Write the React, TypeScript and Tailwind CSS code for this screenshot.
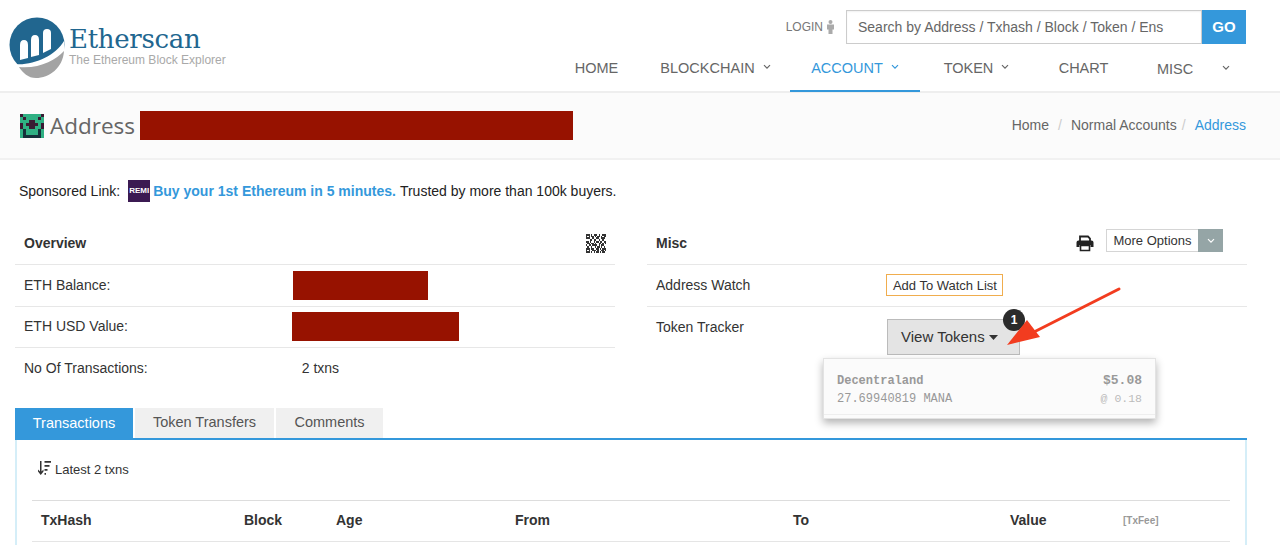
import React from "react";

const sans = "font-['Liberation_Sans',Arial,sans-serif]";

function Logo() {
  return (
    <svg width="58" height="64" viewBox="0 0 58 64" className="shrink-0">
      <circle cx="28" cy="31" r="27.5" fill="#21668f" />
      <path d="M5 50 C24 52 46 42 55 27 L58 60 L5 60 Z" fill="#fff" />
      <path d="M10 55 C30 57 47 48 55 39 C54 56 40 66 27 66 C19 66 14 61 10 55 Z" transform="translate(0,-2)" fill="#a3a3a3" />
      <path d="M11 46 V31 Q11 26 15 26 Q19 26 19 31 V44 Z" fill="#fff" />
      <path d="M22 43 V26 Q22 21 26 21 Q30 21 30 26 V41 Z" fill="#fff" />
      <path d="M34 39 V19 Q34 15 38 15 Q42 15 42 19 V35 Z" fill="#fff" />
    </svg>
  );
}

function Chevron({ className = "" }: { className?: string }) {
  return (
    <svg width="8" height="6" viewBox="0 0 8 6" className={className} fill="none" stroke="currentColor" strokeWidth="1.2">
      <path d="M1 1.2 L4 4.2 L7 1.2" />
    </svg>
  );
}

function NavItem({ label, chevron, active, w, gap }: { label: string; chevron?: boolean; active?: boolean; w: string; gap?: string }) {
  return (
    <div className={`${w} h-[42px] flex items-center justify-center pb-[2px] text-[14.5px] border-b-2 ${active ? "border-[#3498db] text-[#3498db]" : "border-transparent text-[#666]"}`}>
      <span>{label}</span>
      {chevron && <Chevron className={`${gap ?? "ml-2"} mb-1`} />}
    </div>
  );
}

function Identicon() {
  return (
    <svg width="24" height="24" viewBox="0 0 8 8" shapeRendering="crispEdges">
      <rect width="8" height="8" fill="#2fb083" />
      <path d="M0 0h1v1H0zM7 0h1v1H7zM1 1h1v1H1zM6 1h1v1H6zM0 3h1v2H0zM7 3h1v2H7zM3 2h2v3H3zM2 3h1v1H2zM5 3h1v1H5z" fill="#3a1a33" />
      <path d="M1 5h1v2h4V5h1v3H1z" fill="#15303a" />
    </svg>
  );
}

function Redact({ w, h = "h-[29px]", ml }: { w: string; h?: string; ml?: string }) {
  return <div className={`${w} ${h} ${ml ?? ""} bg-[#971200]`} />;
}

function QrIcon() {
  const cells = [
    "1110101110100111",
    "1010110101101011",
    "1110010011001110",
    "0001101100100100",
    "1101001011011011",
    "0110110100110101",
    "1011011110101100",
    "0100100101101010",
    "1110110011010111",
    "1010011101001101",
    "1110101011010110",
  ];
  return (
    <svg width="20" height="19" viewBox="0 0 16 11" preserveAspectRatio="none" shapeRendering="crispEdges">
      {cells.map((r, y) =>
        r.split("").map((c, x) => (c === "1" ? <rect key={`${x}-${y}`} x={x} y={y} width="1" height="1" fill="#333" /> : null))
      )}
    </svg>
  );
}

function PrintIcon() {
  return (
    <svg width="18" height="17" viewBox="0 0 18 17">
      <path d="M4 6V1.5h8l2 2V6" fill="#fff" stroke="#222" strokeWidth="1.8" />
      <path d="M2.5 5.5h13A2 2 0 0 1 17.500 7.500V12h-3V10h-11v2H.5V7.500a2 2 0 0 1 2-2z" fill="#222" />
      <path d="M4.500 10.500h9v5h-9z" fill="#fff" stroke="#222" strokeWidth="1.6" />
    </svg>
  );
}

function Row({ label, children, last }: { label: string; children: React.ReactNode; last?: boolean }) {
  return (
    <div className={`flex items-center h-[41.500px] px-[9px] text-[14px] text-[#333] ${last ? "" : "border-b border-[#e7e7e7]"}`}>
      <span>{label}</span>
      {children}
    </div>
  );
}

export default function App() {
  return (
    <div className={`${sans} relative w-[1280px] h-[545px] overflow-hidden bg-white`}>
      {/* header */}
      <header className="h-[93px] border-b-2 border-[#eeeeee] flex justify-between pl-[9px] pr-[34px]">
        <div className="flex items-start pt-[14px]">
          <Logo />
          <div className="ml-[2px] mt-[10px]">
            <div className="font-['DejaVu_Serif',serif] text-[#21668f] text-[26px] leading-[30px] tracking-[-0.3px]">Etherscan</div>
            <div className="text-[#a9a9a9] text-[12px] leading-[14px] -mt-[1px]">The Ethereum Block Explorer</div>
          </div>
        </div>
        <div className="flex flex-col items-end">
          <div className="flex items-center mt-[10px]">
            <span className="text-[12px] text-[#777]">LOGIN</span>
            <svg width="9" height="14" viewBox="0 0 9 14" className="ml-[3px] mr-[11px]" fill="#aaa">
              <circle cx="4.500" cy="2" r="2" />
              <path d="M1 4.500h7v5H6.500V14h-4V9.500H1z" />
            </svg>
            <div className="w-[356px] h-[34px] border-[1.500px] border-[#cccccc] bg-white flex items-center pl-[11px] text-[14px] text-[#666] shadow-[inset_0_1px_2px_rgba(0,0,0,0.06)]">
              Search by Address / Txhash / Block / Token / Ens
            </div>
            <div className="w-[44px] h-[34px] bg-[#3498db] text-white font-bold text-[15px] flex items-center justify-center">GO</div>
          </div>
          <nav className="flex mt-[5px] h-[49px] items-end -mb-[1px]">
            <NavItem label="HOME" w="w-[89px]" />
            <NavItem label="BLOCKCHAIN" chevron w="w-[149px]" />
            <NavItem label="ACCOUNT" chevron active w="w-[130px]" gap="ml-[8px]" />
            <NavItem label="TOKEN" chevron w="w-[113px]" />
            <NavItem label="CHART" w="w-[101px]" />
            <div className="w-[112px] h-[42px] flex items-center justify-between pb-[2px] text-[14.500px] text-[#666] pl-[23px] pr-[16px]">
              <span>MISC</span>
              <Chevron className="mb-1" />
            </div>
          </nav>
        </div>
      </header>

      {/* page title */}
      <div className="h-[67px] bg-[#fbfbfb] border-b-2 border-[#f1f1f1] flex items-center justify-between pl-[20px] pr-[34px]">
        <div className="flex items-center">
          <Identicon />
          <span className="ml-[6px] text-[#666] text-[22.500px] font-['Open_Sans',sans-serif]">Address</span>
          <Redact w="w-[433px]" ml="ml-[5px]" />
        </div>
        <div className="flex items-center text-[14px] text-[#666]">
          <span>Home</span>
          <span className="text-[#ccc] mx-[9px]">/</span>
          <span>Normal Accounts</span>
          <span className="text-[#ccc] ml-[5px] mr-[9px]">/</span>
          <span className="text-[#3498db]">Address</span>
        </div>
      </div>

      {/* sponsored */}
      <div className="h-[62px] flex items-center pl-[19px] text-[14px] text-[#222]">
        <span>Sponsored Link:</span>
        <div className="ml-[8px] w-[22px] h-[22px] bg-[#3b1a52] text-white text-[8px] font-bold flex items-center justify-center">REMI</div>
        <span className="ml-[3px] text-[#3498db] font-bold">Buy your 1st Ethereum in 5 minutes.</span>
        <span className="ml-[4px]">Trusted by more than 100k buyers.</span>
      </div>

      {/* columns */}
      <div className="flex justify-between pl-[15px] pr-[33px]">
        <section className="w-[600px]">
          <div className="h-[43px] flex items-center justify-between border-b border-[#e7e7e7] pl-[9px] pr-[9px]">
            <span className="font-bold text-[14px] text-[#333]">Overview</span>
            <QrIcon />
          </div>
          <Row label="ETH Balance:"><Redact w="w-[135px]" ml="ml-[183px]" /></Row>
          <Row label="ETH USD Value:"><Redact w="w-[167px]" ml="ml-[164px]" /></Row>
          <Row label="No Of Transactions:" last><span className="ml-[154px]">2 txns</span></Row>
        </section>
        <section className="w-[600px]">
          <div className="h-[43px] flex items-center justify-between border-b border-[#e7e7e7] pl-[9px] pr-[24px]">
            <span className="font-bold text-[14px] text-[#333]">Misc</span>
            <div className="flex items-center">
              <PrintIcon />
              <div className="ml-[12px] flex h-[23px] border border-[#d5d5d5] text-[13px] text-[#333] -mt-[5px]">
                <span className="w-[91px] flex items-center justify-center">More Options</span>
                <span className="w-[25px] bg-[#95a5a6] text-white flex items-center justify-center -my-[1px] -mr-[1px]"><Chevron /></span>
              </div>
            </div>
          </div>
          <Row label="Address Watch">
            <span className="ml-[136px] h-[22px] w-[117px] border border-[#f0ad4e] flex items-center justify-center text-[13px] text-[#333]">Add To Watch List</span>
          </Row>
          <Row label="Token Tracker" last>
            <span className="sr-only">.</span>
          </Row>
        </section>
      </div>

      {/* tabs */}
      <div className="mt-[18px] ml-[15px] mr-[33px]">
        <div className="flex h-[32px] border-b-2 border-[#3498db] text-[14.500px]">
          <div className="w-[118px] h-[32px] bg-[#3498db] text-white flex items-center justify-center">Transactions</div>
          <div className="w-[139px] ml-[2px] h-[30px] bg-[#f0f0f0] text-[#555] flex items-center justify-center">Token Transfers</div>
          <div className="w-[107px] ml-[2px] h-[30px] bg-[#f0f0f0] text-[#555] flex items-center justify-center">Comments</div>
        </div>
        <div className="h-[120px] border-x-2 border-[#d5eef8] px-[15px]">
          <div className="h-[61px] flex items-start pt-[20px] border-b border-[#dddddd] text-[13px] text-[#333] px-[5px]">
            <svg width="14" height="16" viewBox="0 0 14 16" fill="#333" className="mr-[4px]">
              <path d="M3 1h1.500v10.500L6.500 9.500v2L3.750 15 1 11.500v-2l2 2z" />
              <path d="M7.500 1H14v1.700H7.500zM7.500 5H12.500v1.700H7.500zM7.500 9H10.500v1.700H7.500zM7.500 13H9v1.700H7.500z" />
            </svg>
            <span>Latest 2 txns</span>
          </div>
          <div className="h-[41px] border-b border-[#e5e5e5] flex items-center text-[14px] font-bold text-[#333] relative">
            <span className="ml-[9px] w-[203px]">TxHash</span>
            <span className="w-[92px]">Block</span>
            <span className="w-[179px]">Age</span>
            <span className="w-[278px]">From</span>
            <span className="w-[217px]">To</span>
            <span className="w-[113px]">Value</span>
            <span className="text-[10px] text-[#999]">[TxFee]</span>
          </div>
        </div>
      </div>

      {/* overlays */}
      <div className="absolute left-[887px] top-[319px] w-[133px] h-[36px] bg-[#e4e4e4] border border-[#bbbbbb] flex items-center pl-[13px] text-[15px] text-[#333]">
        View Tokens
        <svg width="9" height="5" viewBox="0 0 9 5" className="ml-[4px]" fill="#333"><path d="M0 0h9L4.500 5z" /></svg>
      </div>
      <div className="absolute left-[823px] top-[358px] w-[333px] h-[61px] bg-[#fbfbfb] border border-[#e3e3e3] shadow-[0_4px_8px_rgba(0,0,0,0.3)] font-['Liberation_Mono',monospace] text-[12px] text-[#999]">
        <div className="flex justify-between px-[13px] pt-[13px] leading-[18px] font-bold">
          <span>Decentraland</span>
          <span className="text-[13px]">$5.08</span>
        </div>
        <div className="flex justify-between px-[13px] leading-[18px]">
          <span>27.69940819 MANA</span>
          <span className="text-[#bbb] text-[11.500px]">@ 0.18</span>
        </div>
        <div className="border-t border-[#eeeeee] mt-[6px]" />
      </div>
      <div className="absolute left-[1003px] top-[309px] w-[22px] h-[22px] rounded-full bg-[#2b2b2b] text-white text-[12px] font-bold flex items-center justify-center">1</div>
      <svg className="absolute left-[1000px] top-[284px]" width="125" height="66" viewBox="0 0 125 66">
        <path d="M119 5 L32 49" stroke="#f23c1f" strokeWidth="3" strokeLinecap="round" />
        <path d="M7 61 L27 36 L40 53 Z" fill="#f23c1f" />
      </svg>
    </div>
  );
}
